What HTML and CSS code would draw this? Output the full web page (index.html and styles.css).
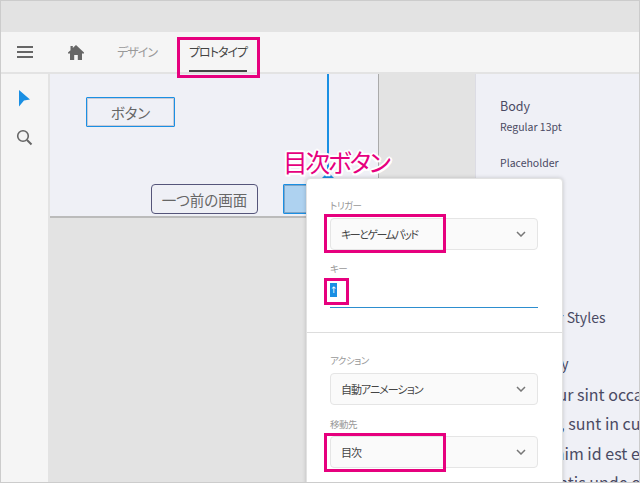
FILE: index.html
```html
<!DOCTYPE html>
<html lang="ja">
<head>
  <meta charset="UTF-8" />
  <title>プロトタイプ</title>
  <link rel="stylesheet" href="styles.css">
</head>
<body>

  <div class="window">
    <div class="titlebar"></div>

    <div class="toolbar">
      <svg class="icon-menu" width="16" height="14" viewBox="0 0 16 14">
        <path d="M0 1h16v2H0zM0 6h16v2H0zM0 11h16v2H0z" fill="#666"/>
      </svg>
      <svg class="icon-home" width="16" height="15" viewBox="0 0 16 15">
        <path d="M8 0L16 7.5V8.500H14V15H9.800V10H6.200V15H2V8.500H0V7.500L2.500 5.200V1H4.800V3L8 0Z" fill="#666"/>
      </svg>
      <span class="tab">デザイン</span>
      <span class="tab tab-active">プロトタイプ</span>
    </div>

    <div class="main">
      <div class="rail">
        <svg class="icon-arrow" width="12" height="17" viewBox="0 0 12 17">
          <path d="M0 0L11 9.500L5 10.500L0 16.500Z" fill="#1a8fe3"/>
        </svg>
        <svg width="17" height="17" viewBox="0 0 17 17">
          <circle cx="7" cy="7" r="5.300" fill="none" stroke="#666" stroke-width="1.600"/>
          <path d="M11 11L15.500 15.500" stroke="#666" stroke-width="2"/>
        </svg>
      </div>

      <div class="canvas">
        <div class="artboard"></div>
        <div class="wire"></div>
        <div class="wire-head"></div>
        <div class="mock-btn mock-btn-selected">ボタン</div>
        <div class="mock-btn mock-btn-back">一つ前の画面</div>
        <div class="mock-btn mock-btn-toc"></div>
      </div>

      <div class="panel">
        <p class="cut-line">Bold 12pt</p>
        <p class="style-name">Body</p>
        <p class="style-meta">Regular 13pt</p>
        <p class="style-meta style-placeholder">Placeholder</p>
        <p class="style-title">Character Styles</p>
        <p class="style-name style-body">Main Body</p>
        <div class="lorem">
          <p>Excepteur sint occaecat</p>
          <p>Nostrud, sunt in culpa</p>
          <p>Mollit anim id est enim</p>
          <p>Perspiciatis unde omnis</p>
        </div>
      </div>
    </div>

    <div class="popover">
      <div class="pop-section">
        <label>トリガー</label>
        <div class="select select-tight">キーとゲームパッド<svg class="chev" width="10" height="6" viewBox="0 0 10 6"><path d="M1 1L5 5L9 1" fill="none" stroke="#777" stroke-width="1.500"/></svg></div>
        <label class="label-next">キー</label>
        <div class="key-input"><span class="key-sel">↑</span></div>
      </div>
      <div class="pop-section pop-section-second">
        <label>アクション</label>
        <div class="select">自動アニメーション<svg class="chev" width="10" height="6" viewBox="0 0 10 6"><path d="M1 1L5 5L9 1" fill="none" stroke="#777" stroke-width="1.500"/></svg></div>
        <label class="label-next label-target">移動先</label>
        <div class="select">目次<svg class="chev" width="10" height="6" viewBox="0 0 10 6"><path d="M1 1L5 5L9 1" fill="none" stroke="#777" stroke-width="1.500"/></svg></div>
      </div>
    </div>

    <!-- 注釈 -->
    <div class="callout">目次ボタン</div>
    <div class="mark mark-tab"></div>
    <div class="mark mark-trigger"></div>
    <div class="mark mark-key"></div>
    <div class="mark mark-target"></div>
  </div>

</body>
</html>
```

FILE: styles.css
```css
* {
  box-sizing: border-box;
}
body {
  margin: 0;
  font-family: "Noto Sans CJK JP", "Noto Sans", sans-serif;
  font-feature-settings: "palt";
  background-color: #fff;
}
p {
  margin: 0;
}
.window {
  position: relative;
  display: flex;
  flex-direction: column;
  width: 640px;
  height: 483px;
  border: 1px solid #ccc;
  overflow: hidden;
}
.titlebar {
  height: 31px;
  background-color: #e3e3e3;
}
.toolbar {
  display: flex;
  align-items: center;
  height: 42px;
  padding-left: 16px;
  background-color: #f5f5f5;
  border-bottom: 2px solid #e3e3e3;
}
.icon-home {
  margin-left: 35px;
}
.tab {
  display: flex;
  align-items: center;
  height: 40px;
  margin-left: 33px;
  padding-top: 1px;
  font-size: 12px;
  letter-spacing: -1px;
  color: #999;
  border-bottom: 2px solid transparent;
}
.tab-active {
  margin-left: 32px;
  color: #444;
  border-bottom-color: #444;
}
.main {
  display: flex;
  flex: 1;
  min-height: 0;
}
.rail {
  display: flex;
  flex-direction: column;
  align-items: center;
  gap: 22px;
  width: 47px;
  padding: 16px 0 0;
  background-color: #f5f5f5;
}
.icon-arrow {
  margin-left: 1px;
}
.canvas {
  position: relative;
  width: 427px;
  background-color: #e3e3e3;
}
.artboard {
  position: absolute;
  left: 2px;
  top: 0;
  width: 329px;
  height: 144px;
  background-color: #eff0f6;
  border-right: 1px solid #aaa;
  border-bottom: 2px solid #bbb;
}
.wire {
  position: absolute;
  left: 279px;
  top: 0;
  width: 2px;
  height: 102px;
  background-color: #1a8fe3;
}
.wire-head {
  position: absolute;
  left: 273px;
  top: 98px;
  width: 14px;
  height: 7px;
  background-color: #1a8fe3;
  clip-path: polygon(50% 0, 100% 100%, 0 100%);
}
.mock-btn {
  position: absolute;
  display: flex;
  align-items: center;
  justify-content: center;
  height: 30px;
  font-size: 14.500px;
  color: #666;
  border: 1px solid #55557a;
  border-radius: 4px;
}
.mock-btn-selected {
  left: 38px;
  top: 23px;
  width: 89px;
  border-color: #1a8fe3;
  border-radius: 1px;
  box-shadow: inset 0 0 0 1px #c9cad6;
}
.mock-btn-back {
  left: 103px;
  top: 110px;
  width: 107px;
}
.mock-btn-toc {
  left: 235px;
  top: 110px;
  width: 60px;
  background-color: #aed2f0;
  border-color: #1a8fe3;
  border-radius: 1px;
  box-shadow: inset 0 0 0 1px #7fa6c8;
}
.panel {
  flex: 1;
  min-width: 0;
  padding-left: 25px;
  overflow: hidden;
  color: #4a4a63;
  background-color: #eff0f6;
  box-shadow: inset 1px 0 0 #dcdce4;
}
.cut-line {
  margin-top: -19px;
  font-size: 10.500px;
  line-height: 20px;
  white-space: nowrap;
}
.style-name {
  margin-top: 21px;
  font-size: 12.500px;
  line-height: 20px;
}
.style-meta {
  margin-top: 1px;
  font-size: 10.500px;
  line-height: 20px;
}
.style-placeholder {
  margin-top: 16px;
}
.style-title {
  margin-top: 133px;
  font-size: 14px;
  line-height: 22px;
}
.style-body {
  margin-top: 25px;
  font-size: 14px;
  white-space: nowrap;
}
.lorem {
  margin-top: 7px;
  font-size: 16px;
  line-height: 29.300px;
  white-space: nowrap;
}
.popover {
  position: absolute;
  left: 305px;
  top: 177px;
  width: 257px;
  height: 320px;
  background-color: #fff;
  border: 1px solid #e2e2e2;
  border-radius: 4px;
  box-shadow: 0 0 4px rgba(0, 0, 0, 0.18);
}
.pop-section {
  padding: 19px 24px 0 23px;
}
.pop-section-second {
  height: 150px;
  padding-top: 20px;
  border-top: 1px solid #ddd;
}
.pop-section label {
  display: block;
  font-size: 9.500px;
  letter-spacing: -0.500px;
  line-height: 14px;
  color: #999;
}
.pop-section .label-next {
  margin-top: 11px;
}
.pop-section .label-target {
  margin-top: 12px;
}
.select {
  display: flex;
  align-items: center;
  justify-content: space-between;
  height: 32px;
  padding: 0 11px 0 10px;
  font-size: 11px;
  letter-spacing: -1px;
  color: #444;
  background-color: #fafafa;
  border: 1px solid #e5e5e5;
  border-radius: 4px;
}
.select-tight {
  letter-spacing: -1.500px;
}
.pop-section label + .select {
  margin-top: 6px;
}
.pop-section .label-target + .select {
  margin-top: 5px;
}
.chev {
  flex: none;
}
.key-input {
  height: 33px;
  padding-top: 8px;
  margin-bottom: 24px;
  border-bottom: 1px solid #2d8ecf;
}
.key-sel {
  display: block;
  width: 7px;
  height: 14px;
  overflow: hidden;
  font-family: "DejaVu Sans", sans-serif;
  font-size: 9px;
  line-height: 14px;
  color: #fff;
  background-color: #1a8fe3;
}
.callout {
  position: absolute;
  left: 282px;
  top: 146px;
  font-size: 24.500px;
  letter-spacing: -2px;
  line-height: 30px;
  white-space: nowrap;
  color: #e6007e;
  text-shadow: 2px 0 0 #fff, -2px 0 0 #fff, 0 2px 0 #fff, 0 -2px 0 #fff, 1.500px 1.500px 0 #fff, -1.500px 1.500px 0 #fff, 1.500px -1.500px 0 #fff, -1.500px -1.500px 0 #fff;
}
.mark {
  position: absolute;
  border: 3px solid #e6007e;
}
.mark-tab {
  left: 176px;
  top: 36px;
  width: 83px;
  height: 41px;
}
.mark-trigger {
  left: 323px;
  top: 213px;
  width: 122px;
  height: 39px;
}
.mark-key {
  left: 323px;
  top: 277px;
  width: 25px;
  height: 27px;
}
.mark-target {
  left: 323px;
  top: 432px;
  width: 122px;
  height: 39px;
}
```
